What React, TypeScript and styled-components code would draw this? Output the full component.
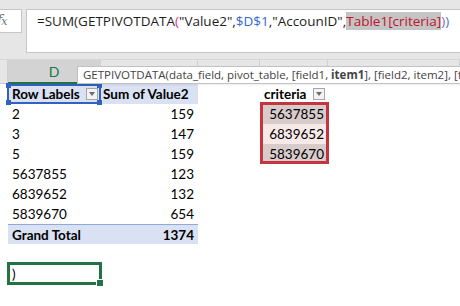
import React from "react"
import styled, {createGlobalStyle} from "styled-components"

const GlobalStyle = createGlobalStyle`
  html, body {
    margin: 0;
    padding: 0;
    background: #fff;
  }
  body {
    width: 460px;
    height: 306px;
    overflow: hidden;
    font-family: Lato, "Liberation Sans", sans-serif;
  }
`

const Sheet = styled.div`
  position: relative;
  width: 460px;
  height: 306px;
  overflow: hidden;
  background: #fff;
`

// ---- formula bar ----
const FormulaBar = styled.div`
  height: 60px;
  box-sizing: border-box;
  display: flex;
  align-items: flex-start;
  gap: 4px;
  padding-top: 9px;
  background: #e6e6e6;
  border-bottom: 1px solid #d6d6d6;
`

const FxBox = styled.div`
  width: 22px;
  height: 24px;
  box-sizing: border-box;
  background: #fff;
  border: 1px solid #c6c6c6;
  border-left: none;
  font: italic 14px "DejaVu Serif", serif;
  line-height: 20px;
  color: #707070;
  text-indent: -3px;
  letter-spacing: -1px;
  overflow: hidden;
  white-space: nowrap;
`

const FxSub = styled.span`
  font-size: 11px;
`

const FormulaBox = styled.div`
  flex: 1;
  height: 44px;
  box-sizing: border-box;
  background: #fff;
  border: 1px solid #c6c6c6;
  border-right: none;
  padding: 2px 0 0 10px;
  font-family: "Open Sans", sans-serif;
  font-size: 13.5px;
  line-height: 19px;
  color: #1e1e1e;
  white-space: nowrap;
  overflow: hidden;
`

const Token = styled.span<{$color?: string; $hl?: boolean}>`
  color: ${p => p.$color || "inherit"};
  background: ${p => (p.$hl ? "#c4c4c4" : "transparent")};
`

// ---- column headers ----
const HeaderRow = styled.div`
  display: flex;
  height: 24px;
  box-sizing: border-box;
  background: #e6e6e6;
  border-bottom: 1px solid #c8c8c8;
`

const ColHead = styled.div<{$w: number; $active?: boolean}>`
  width: ${p => p.$w}px;
  flex: ${p => (p.$w ? "none" : "1")};
  box-sizing: border-box;
  display: flex;
  align-items: center;
  justify-content: center;
  border-right: 1px solid #d0d0d0;
  font-size: 14px;
  color: ${p => (p.$active ? "#217346" : "#444")};
  background: ${p => (p.$active ? "#d3d3d3" : "#e6e6e6")};
  border-bottom: ${p => (p.$active ? "2px solid #217346" : "none")};
  margin-bottom: ${p => (p.$active ? "-1px" : "0")};
`

const Tooltip = styled.div`
  position: absolute;
  left: 77px;
  top: 66px;
  right: -40px;
  height: 18px;
  box-sizing: border-box;
  background: #fff;
  border: 1px solid #c2c2c2;
  padding: 0 5px;
  font-family: "Open Sans", sans-serif;
  font-size: 11.5px;
  line-height: 15px;
  color: #444;
  white-space: nowrap;
  box-shadow: 1px 1px 2px rgba(0, 0, 0, 0.08);
  z-index: 5;
`

// ---- grid ----
const Grid = styled.div`
  display: grid;
  grid-template-columns: 8px 93px 97px 62px 68px 1fr;
  grid-auto-rows: 20px;
`

const Cell = styled.div<{
  $row: number
  $col: number
  $align?: "left" | "right"
  $bold?: boolean
  $bg?: string
  $total?: boolean
}>`
  grid-row: ${p => p.$row};
  grid-column: ${p => p.$col};
  display: flex;
  align-items: center;
  justify-content: ${p => (p.$align === "right" ? "flex-end" : "space-between")};
  padding: 0 ${p => (p.$align === "right" ? "4px" : "3px")} 0 4px;
  box-sizing: border-box;
  font-size: 13.5px;
  line-height: 20px;
  font-weight: ${p => (p.$bold ? 700 : 400)};
  color: #000;
  background: ${p => p.$bg || "transparent"};
  border-top: ${p => (p.$total ? "1px solid #8ea9db" : "none")};
  white-space: nowrap;
`

const FilterButton = styled.span`
  width: 12px;
  height: 12px;
  box-sizing: border-box;
  border: 1px solid #a6a6a6;
  background: #f3f3f3;
  display: flex;
  align-items: center;
  justify-content: center;
  flex: none;
  &::after {
    content: "";
    border-left: 3.5px solid transparent;
    border-right: 3.5px solid transparent;
    border-top: 4px solid #6b6b6b;
  }
`

const RangeBox = styled.div<{$color: string; $width: number}>`
  position: relative;
  grid-row: 2 / 5;
  grid-column: 5;
  margin: -2px -1px 0 0;
  border: ${p => p.$width}px solid ${p => p.$color};
  pointer-events: none;
`

const SelectBox = styled.div`
  position: relative;
  grid-row: 1;
  grid-column: 2;
  margin: 0 0 0 -1px;
  border: 2px solid #2f63bf;
  pointer-events: none;
`

const Handle = styled.span<{$v: "top" | "bottom"; $h: "left" | "right"}>`
  position: absolute;
  width: 5px;
  height: 5px;
  background: #2f63bf;
  ${p => p.$v}: -3px;
  ${p => p.$h}: -3px;
`

const ActiveBox = styled.div`
  position: relative;
  grid-row: 10;
  grid-column: 2;
  margin: -2px -1px -1px -1px;
  border: 3px solid #217346;
  pointer-events: none;
`

const FillHandle = styled.span`
  position: absolute;
  right: -4px;
  bottom: -4px;
  width: 6px;
  height: 6px;
  background: #217346;
  border-left: 1px solid #fff;
  border-top: 1px solid #fff;
`

const pivotRows = [
  ["2", "159"],
  ["3", "147"],
  ["5", "159"],
  ["5637855", "123"],
  ["6839652", "132"],
  ["5839670", "654"],
]

const criteria = ["5637855", "6839652", "5839670"]

export default function App() {
  return (
    <Sheet>
      <GlobalStyle />
      <FormulaBar>
        <FxBox>
          f<FxSub>x</FxSub>
        </FxBox>
        <FormulaBox>
          =SUM(GETPIVOTDATA<Token $color="#d2338b">(</Token>"Value2",
          <Token $color="#3467d0">$D$1</Token>,"AccounID",
          <Token $color="#c0142c" $hl>
            Table1[criteria]
          </Token>
          <Token $color="#7b68b8">)</Token>
          <Token $color="#4d72b8">)</Token>
        </FormulaBox>
      </FormulaBar>

      <HeaderRow>
        <ColHead $w={8} />
        <ColHead $w={93} $active>
          D
        </ColHead>
        <ColHead $w={97} />
        <ColHead $w={62} />
        <ColHead $w={68} />
        <ColHead $w={0} />
      </HeaderRow>

      <Tooltip>
        GETPIVOTDATA(data_field, pivot_table, [field1, <b>item1</b>], [field2,
        item2], [field3, item3]
      </Tooltip>

      <Grid>
        <Cell $row={1} $col={2} $bold $bg="#d9e1f2">
          Row Labels
          <FilterButton />
        </Cell>
        <Cell $row={1} $col={3} $bold $bg="#d9e1f2" style={{paddingLeft: 2}}>
          Sum of Value2
        </Cell>
        <Cell $row={1} $col={5} $bold>
          criteria
          <FilterButton />
        </Cell>

        {pivotRows.map(([label, value], i) => (
          <React.Fragment key={label}>
            <Cell $row={i + 2} $col={2}>
              {label}
            </Cell>
            <Cell $row={i + 2} $col={3} $align="right">
              {value}
            </Cell>
          </React.Fragment>
        ))}

        {criteria.map((c, i) => (
          <Cell
            key={c}
            $row={i + 2}
            $col={5}
            $align="right"
            $bg={i % 2 ? "#f8e9e9" : "#d8cbcb"}
          >
            {c}
          </Cell>
        ))}

        <Cell $row={8} $col={2} $bold $bg="#d9e1f2" $total>
          Grand Total
        </Cell>
        <Cell $row={8} $col={3} $bold $bg="#d9e1f2" $total $align="right">
          1374
        </Cell>

        <Cell $row={10} $col={2}>
          )
        </Cell>

        <RangeBox $color="#c3353f" $width={3} />
        <SelectBox>
          <Handle $v="top" $h="left" />
          <Handle $v="top" $h="right" />
          <Handle $v="bottom" $h="left" />
          <Handle $v="bottom" $h="right" />
        </SelectBox>
        <ActiveBox>
          <FillHandle />
        </ActiveBox>
      </Grid>
    </Sheet>
  )
}
